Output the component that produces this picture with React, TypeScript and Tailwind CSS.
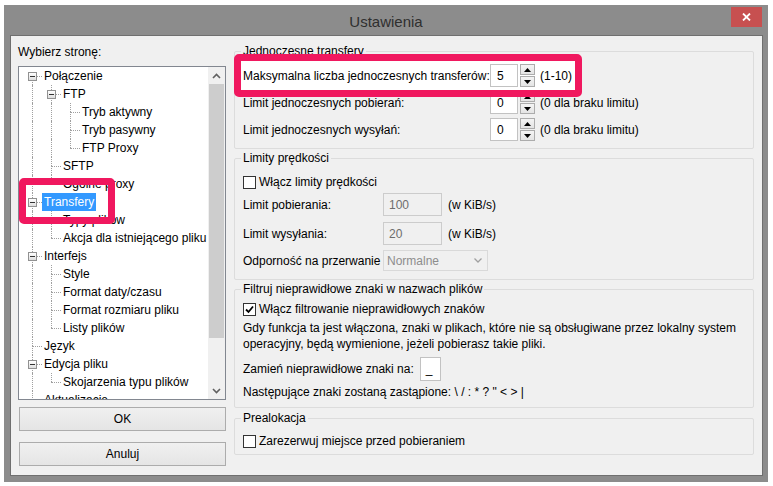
import React from "react";

type TreeItem = {
  label: string;
  guides: boolean[];
  last?: boolean;
  box?: boolean;
  first?: boolean;
  selected?: boolean;
};

const tree: TreeItem[] = [
  { label: "Połączenie", guides: [], box: true, first: true },
  { label: "FTP", guides: [true], box: true },
  { label: "Tryb aktywny", guides: [true, true] },
  { label: "Tryb pasywny", guides: [true, true] },
  { label: "FTP Proxy", guides: [true, true], last: true },
  { label: "SFTP", guides: [true] },
  { label: "Ogólne proxy", guides: [true], last: true },
  { label: "Transfery", guides: [], box: true, selected: true },
  { label: "Typy plików", guides: [true] },
  { label: "Akcja dla istniejącego pliku", guides: [true], last: true },
  { label: "Interfejs", guides: [], box: true },
  { label: "Style", guides: [true] },
  { label: "Format daty/czasu", guides: [true] },
  { label: "Format rozmiaru pliku", guides: [true] },
  { label: "Listy plików", guides: [true], last: true },
  { label: "Język", guides: [] },
  { label: "Edycja pliku", guides: [], box: true },
  { label: "Skojarzenia typu plików", guides: [true], last: true },
  { label: "Aktualizacje", guides: [] },
];

function TreeRow({ item }: { item: TreeItem }) {
  return (
    <div className="flex h-[18px] shrink-0 items-stretch">
      {item.guides.map((g, i) => (
        <div key={i} className="relative w-[19px] shrink-0">
          {g && (
            <div className="absolute bottom-0 left-[9px] top-0 border-l border-dotted border-[#a0a0a0]" />
          )}
        </div>
      ))}
      <div className="relative w-[19px] shrink-0">
        {!item.first && (
          <div className="absolute left-[9px] top-0 h-[9px] border-l border-dotted border-[#a0a0a0]" />
        )}
        {!item.last && (
          <div className="absolute bottom-0 left-[9px] top-[9px] border-l border-dotted border-[#a0a0a0]" />
        )}
        <div className="absolute left-[9px] right-0 top-[9px] border-t border-dotted border-[#a0a0a0]" />
        {item.box && (
          <span className="absolute left-[5px] top-[5px] flex h-[9px] w-[9px] items-center justify-center border border-[#919191] bg-linear-to-b from-white to-[#dedede]">
            <span className="h-px w-[5px] bg-[#333]" />
          </span>
        )}
      </div>
      <span
        className={
          item.selected
            ? "whitespace-nowrap bg-[#3399ff] px-[2px] leading-[18px] text-white"
            : "whitespace-nowrap px-[2px] leading-[18px]"
        }
      >
        {item.label}
      </span>
    </div>
  );
}

function Checkbox({ checked }: { checked?: boolean }) {
  return (
    <span className="flex h-[13px] w-[13px] shrink-0 items-center justify-center border border-[#333] bg-white">
      {checked && (
        <svg width="9" height="9" viewBox="0 0 9 9">
          <path d="M1 4.5 L3.5 7 L8 1.5" stroke="#000" strokeWidth="1.8" fill="none" />
        </svg>
      )}
    </span>
  );
}

function Spinner() {
  return (
    <div className="ml-[2px] flex h-[23px] w-[15px] shrink-0 flex-col gap-[1px]">
      <div className="flex flex-1 items-center justify-center border border-[#acacac] bg-linear-to-b from-[#f4f4f4] to-[#e4e4e4]">
        <svg width="7" height="4" viewBox="0 0 7 4">
          <path d="M0 4 L3.5 0 L7 4Z" fill="#000" />
        </svg>
      </div>
      <div className="flex flex-1 items-center justify-center border border-[#acacac] bg-linear-to-b from-[#f4f4f4] to-[#e4e4e4]">
        <svg width="7" height="4" viewBox="0 0 7 4">
          <path d="M0 0 L3.5 4 L7 0Z" fill="#000" />
        </svg>
      </div>
    </div>
  );
}

function NumberRow({ label, value, hint, raised }: { label: string; value: string; hint: string; raised?: boolean }) {
  return (
    <div className={raised ? "relative z-10 flex h-[23px] items-center" : "flex h-[23px] items-center"}>
      <span className="w-[247px] shrink-0 whitespace-nowrap">{label}</span>
      <span className="flex h-[23px] w-[28px] items-center border border-[#c2c2c2] bg-white pl-[6px]">{value}</span>
      <Spinner />
      <span className="ml-[5px] whitespace-nowrap">{hint}</span>
    </div>
  );
}

function Group({ title, className, children }: { title: string; className: string; children: React.ReactNode }) {
  return (
    <fieldset className={"rounded-[2px] border border-[#dcdcdc] px-[8px] " + className}>
      <legend className="-ml-[2px] px-[2px] leading-[16px]">{title}</legend>
      {children}
    </fieldset>
  );
}

export default function App() {
  return (
    <div className="relative h-[486px] w-[773px] overflow-hidden bg-white pl-[4px] pt-[5px] font-['Liberation_Sans',Arial,sans-serif] text-[12px] text-black">
      <div className="flex h-[477px] w-[764px] flex-col bg-[#8c8c8c]">
        <div className="relative flex h-[30px] shrink-0 items-center justify-center pt-[4px]">
          <span className="text-[15px] text-[#2f2f2f]">Ustawienia</span>
          <div className="absolute right-[6px] top-[2px] flex h-[20px] w-[31px] items-center justify-center bg-[#c75050]">
            <svg width="9" height="8" viewBox="0 0 9 8">
              <path d="M1 0.5 L8 7.5 M8 0.5 L1 7.5" stroke="#fff" strokeWidth="1.8" />
            </svg>
          </div>
        </div>

        <div className="ml-[6px] flex h-[441px] w-[753px] border border-[#6f6f6f] bg-[#f0f0f0]">
          {/* left column */}
          <div className="ml-[7px] flex w-[208px] shrink-0 flex-col pt-[8px]">
            <span className="leading-[16px]">Wybierz stronę:</span>
            <div className="mt-[6px] flex h-[334px] border border-[#828790] bg-white">
              <div className="flex flex-1 flex-col overflow-hidden pl-[4px]">
                {tree.map((item) => (
                  <TreeRow key={item.label} item={item} />
                ))}
              </div>
              <div className="flex w-[17px] shrink-0 flex-col bg-[#f0f0f0]">
                <div className="flex h-[17px] items-center justify-center">
                  <svg width="9" height="6" viewBox="0 0 9 6">
                    <path d="M1 5 L4.5 1.5 L8 5" stroke="#606060" strokeWidth="1.6" fill="none" />
                  </svg>
                </div>
                <div className="flex flex-1 flex-col">
                  <div className="mx-[1px] h-[254px] bg-[#cdcdcd]" />
                </div>
                <div className="flex h-[17px] items-center justify-center">
                  <svg width="9" height="6" viewBox="0 0 9 6">
                    <path d="M1 1 L4.5 4.5 L8 1" stroke="#606060" strokeWidth="1.6" fill="none" />
                  </svg>
                </div>
              </div>
            </div>
            <button className="ml-[1px] mt-[7px] h-[24px] border border-[#acacac] bg-linear-to-b from-[#f0f0f0] to-[#e5e5e5]">
              OK
            </button>
            <button className="ml-[1px] mt-[11px] h-[24px] border border-[#acacac] bg-linear-to-b from-[#f0f0f0] to-[#e5e5e5]">
              Anuluj
            </button>
          </div>

          {/* right column */}
          <div className="ml-[8px] flex w-[520px] shrink-0 flex-col pt-[7px]">
            <Group title="Jednoczesne transfery" className="pb-[7px] pt-[5px]">
              <div className="flex flex-col gap-[4px]">
                <NumberRow label="Maksymalna liczba jednoczesnych transferów:" value="5" hint="(1-10)" raised />
                <NumberRow label="Limit jednoczesnych pobierań:" value="0" hint="(0 dla braku limitu)" />
                <NumberRow label="Limit jednoczesnych wysyłań:" value="0" hint="(0 dla braku limitu)" />
              </div>
            </Group>

            <Group title="Limity prędkości" className="mt-[1px] pb-[8px] pt-[8px]">
              <label className="flex h-[16px] items-center gap-[3px]">
                <Checkbox />
                <span>Włącz limity prędkości</span>
              </label>
              <div className="mt-[3px] flex h-[23px] items-center">
                <span className="w-[140px] shrink-0">Limit pobierania:</span>
                <span className="flex h-[23px] w-[59px] items-center border border-[#cccccc] pl-[5px] text-[#6d6d6d]">100</span>
                <span className="ml-[6px]">(w KiB/s)</span>
              </div>
              <div className="mt-[6px] flex h-[23px] items-center">
                <span className="w-[140px] shrink-0">Limit wysyłania:</span>
                <span className="flex h-[23px] w-[59px] items-center border border-[#cccccc] pl-[5px] text-[#6d6d6d]">20</span>
                <span className="ml-[6px]">(w KiB/s)</span>
              </div>
              <div className="mt-[5px] flex h-[21px] items-center">
                <span className="w-[140px] shrink-0 whitespace-nowrap">Odporność na przerwanie</span>
                <span className="flex h-[21px] w-[105px] items-center justify-between border border-[#d9d9d9] pl-[3px] pr-[5px] text-[#8d8d8d]">
                  Normalne
                  <svg width="8" height="5" viewBox="0 0 8 5">
                    <path d="M0.5 0.5 L4 4 L7.5 0.5" stroke="#a0a0a0" strokeWidth="1.3" fill="none" />
                  </svg>
                </span>
              </div>
            </Group>

            <Group title="Filtruj nieprawidłowe znaki w nazwach plików" className="mt-[1px] pb-[7px] pt-[4px]">
              <label className="flex h-[16px] items-center gap-[3px]">
                <Checkbox checked />
                <span>Włącz filtrowanie nieprawidłowych znaków</span>
              </label>
              <p className="mt-[3px] whitespace-nowrap leading-[16px]">
                Gdy funkcja ta jest włączona, znaki w plikach, które nie są obsługiwane przez lokalny system
                <br />
                operacyjny, będą wymienione, jeżeli pobierasz takie pliki.
              </p>
              <div className="mt-[5px] flex h-[24px] items-center gap-[6px]">
                <span>Zamień nieprawidłowe znaki na:</span>
                <span className="flex h-[24px] w-[21px] items-center border border-[#c2c2c2] bg-white pl-[5px]">_</span>
              </div>
              <div className="mt-[3px] flex h-[16px] items-center whitespace-nowrap">
                Następujące znaki zostaną zastąpione: \ / : * ? " &lt; &gt; |
              </div>
            </Group>

            <Group title="Prealokacja" className="mt-[2px] pb-[5px] pt-[7px]">
              <label className="flex h-[16px] items-center gap-[3px]">
                <Checkbox />
                <span>Zarezerwuj miejsce przed pobieraniem</span>
              </label>
            </Group>
          </div>
        </div>
      </div>

      {/* annotation highlights */}
      <div className="absolute left-[19px] top-[178px] h-[46px] w-[96px] rounded-[5px] border-[7px] border-[#f0185f]" />
      <div className="absolute left-[234px] top-[54px] z-[5] h-[43px] w-[348px] rounded-[5px] border-[7px] border-[#f0185f] bg-white" />
    </div>
  );
}
